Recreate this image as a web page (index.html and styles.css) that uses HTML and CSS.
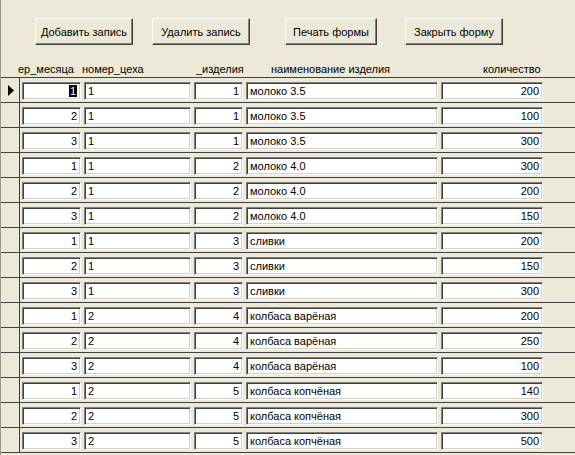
FILE: index.html
```html
<!DOCTYPE html>
<html lang="ru">
<head>
<meta charset="utf-8">
<title>Форма</title>
<link rel="stylesheet" href="styles.css">
</head>
<body>
<div class="form">
  <div class="header">
    <div class="buttons">
      <button class="btn btn-add">Добавить запись</button>
      <button class="btn btn-del">Удалить запись</button>
      <button class="btn btn-print">Печать формы</button>
      <button class="btn btn-close">Закрыть форму</button>
    </div>
    <div class="labels">
      <span class="lbl l1">ер_месяца</span>
      <span class="lbl l2">номер_цеха</span>
      <span class="lbl l3">_изделия</span>
      <span class="lbl l4">наименование изделия</span>
      <span class="lbl l5">количество</span>
    </div>
  </div>
  <div class="rows">
    <div class="row current">
      <div class="sel"><svg class="arrow" width="6" height="11" viewBox="0 0 6 11"><polygon points="0,0 6,5.5 0,11" fill="#000"/></svg></div>
      <div class="fields">
        <div class="fld f1 num"><span class="hl">1</span></div>
        <div class="fld f2">1</div>
        <div class="fld f3 num">1</div>
        <div class="fld f4">молоко 3.5</div>
        <div class="fld f5 num">200</div>
      </div>
    </div>
    <div class="row"><div class="sel"></div><div class="fields"><div class="fld f1 num">2</div><div class="fld f2">1</div><div class="fld f3 num">1</div><div class="fld f4">молоко 3.5</div><div class="fld f5 num">100</div></div></div>
    <div class="row"><div class="sel"></div><div class="fields"><div class="fld f1 num">3</div><div class="fld f2">1</div><div class="fld f3 num">1</div><div class="fld f4">молоко 3.5</div><div class="fld f5 num">300</div></div></div>
    <div class="row"><div class="sel"></div><div class="fields"><div class="fld f1 num">1</div><div class="fld f2">1</div><div class="fld f3 num">2</div><div class="fld f4">молоко 4.0</div><div class="fld f5 num">300</div></div></div>
    <div class="row"><div class="sel"></div><div class="fields"><div class="fld f1 num">2</div><div class="fld f2">1</div><div class="fld f3 num">2</div><div class="fld f4">молоко 4.0</div><div class="fld f5 num">200</div></div></div>
    <div class="row"><div class="sel"></div><div class="fields"><div class="fld f1 num">3</div><div class="fld f2">1</div><div class="fld f3 num">2</div><div class="fld f4">молоко 4.0</div><div class="fld f5 num">150</div></div></div>
    <div class="row"><div class="sel"></div><div class="fields"><div class="fld f1 num">1</div><div class="fld f2">1</div><div class="fld f3 num">3</div><div class="fld f4">сливки</div><div class="fld f5 num">200</div></div></div>
    <div class="row"><div class="sel"></div><div class="fields"><div class="fld f1 num">2</div><div class="fld f2">1</div><div class="fld f3 num">3</div><div class="fld f4">сливки</div><div class="fld f5 num">150</div></div></div>
    <div class="row"><div class="sel"></div><div class="fields"><div class="fld f1 num">3</div><div class="fld f2">1</div><div class="fld f3 num">3</div><div class="fld f4">сливки</div><div class="fld f5 num">300</div></div></div>
    <div class="row"><div class="sel"></div><div class="fields"><div class="fld f1 num">1</div><div class="fld f2">2</div><div class="fld f3 num">4</div><div class="fld f4">колбаса варёная</div><div class="fld f5 num">200</div></div></div>
    <div class="row"><div class="sel"></div><div class="fields"><div class="fld f1 num">2</div><div class="fld f2">2</div><div class="fld f3 num">4</div><div class="fld f4">колбаса варёная</div><div class="fld f5 num">250</div></div></div>
    <div class="row"><div class="sel"></div><div class="fields"><div class="fld f1 num">3</div><div class="fld f2">2</div><div class="fld f3 num">4</div><div class="fld f4">колбаса варёная</div><div class="fld f5 num">100</div></div></div>
    <div class="row"><div class="sel"></div><div class="fields"><div class="fld f1 num">1</div><div class="fld f2">2</div><div class="fld f3 num">5</div><div class="fld f4">колбаса копчёная</div><div class="fld f5 num">140</div></div></div>
    <div class="row"><div class="sel"></div><div class="fields"><div class="fld f1 num">2</div><div class="fld f2">2</div><div class="fld f3 num">5</div><div class="fld f4">колбаса копчёная</div><div class="fld f5 num">300</div></div></div>
    <div class="row"><div class="sel"></div><div class="fields"><div class="fld f1 num">3</div><div class="fld f2">2</div><div class="fld f3 num">5</div><div class="fld f4">колбаса копчёная</div><div class="fld f5 num">500</div></div></div>
  </div>
</div>
</body>
</html>
```

FILE: styles.css
```css
html, body {
  margin: 0;
  padding: 0;
  background: #ECE9D8;
}
body {
  font-family: "Liberation Sans", Arial, sans-serif;
  font-size: 11px;
  color: #000;
  width: 575px;
  height: 455px;
  overflow: hidden;
}
.form {
  border-left: 1px solid #9c9a8e;
  height: 455px;
}
.header {
  height: 77px;
  position: relative;
}
.buttons {
  display: flex;
  padding: 18px 0 0 34px;
}
.btn {
  font-family: inherit;
  font-size: 11px;
  color: #000;
  background: #ECE9D8;
  height: 27px;
  margin: 0;
  padding: 0;
  border-style: solid;
  border-width: 1px;
  border-color: #fff #404040 #404040 #fff;
  box-shadow: inset -1px -1px 0 #808080;
  border-radius: 0;
}
.btn-add { width: 98px; }
.btn-del { width: 98px; margin-left: 19px; }
.btn-print { width: 92px; margin-left: 35px; }
.btn-close { width: 98px; margin-left: 28px; }
.labels {
  display: flex;
  padding: 16px 0 0 17px;
  height: 16px;
  line-height: 16px;
  white-space: nowrap;
}
.lbl { display: block; overflow: hidden; }
.l1 { width: 64px; }
.l2 { width: 114px; }
.l3 { width: 75px; }
.l4 { width: 212px; }
.l5 { width: 70px; }
.rows {
  border-bottom: 1px solid #404040;
}
.row {
  display: flex;
  height: 24px;
  border-top: 1px solid #404040;
}
.sel {
  width: 19px;
  border-right: 1px solid #404040;
  display: flex;
  align-items: center;
  padding-left: 7px;
  box-sizing: border-box;
}
.arrow { display: block; margin-top: 1px; }
.fields {
  display: flex;
  gap: 3px;
  padding: 4px 0 0 2px;
}
.fld {
  box-sizing: border-box;
  height: 18px;
  line-height: 14px;
  background: #fff;
  border-style: solid;
  border-width: 1px;
  border-color: #808080 #fff #fff #808080;
  box-shadow: inset 1px 1px 0 #404040, inset -1px -1px 0 #D4D0C8;
  padding: 1px 3px 0 3px;
  white-space: nowrap;
  overflow: hidden;
}
.num { text-align: right; }
.f1 { width: 59px; }
.f2 { width: 107px; }
.f3 { width: 49px; }
.f4 { width: 192px; }
.f5 { width: 102px; }
.hl {
  background: #000;
  color: #fff;
  padding: 0 1px;
}
```
